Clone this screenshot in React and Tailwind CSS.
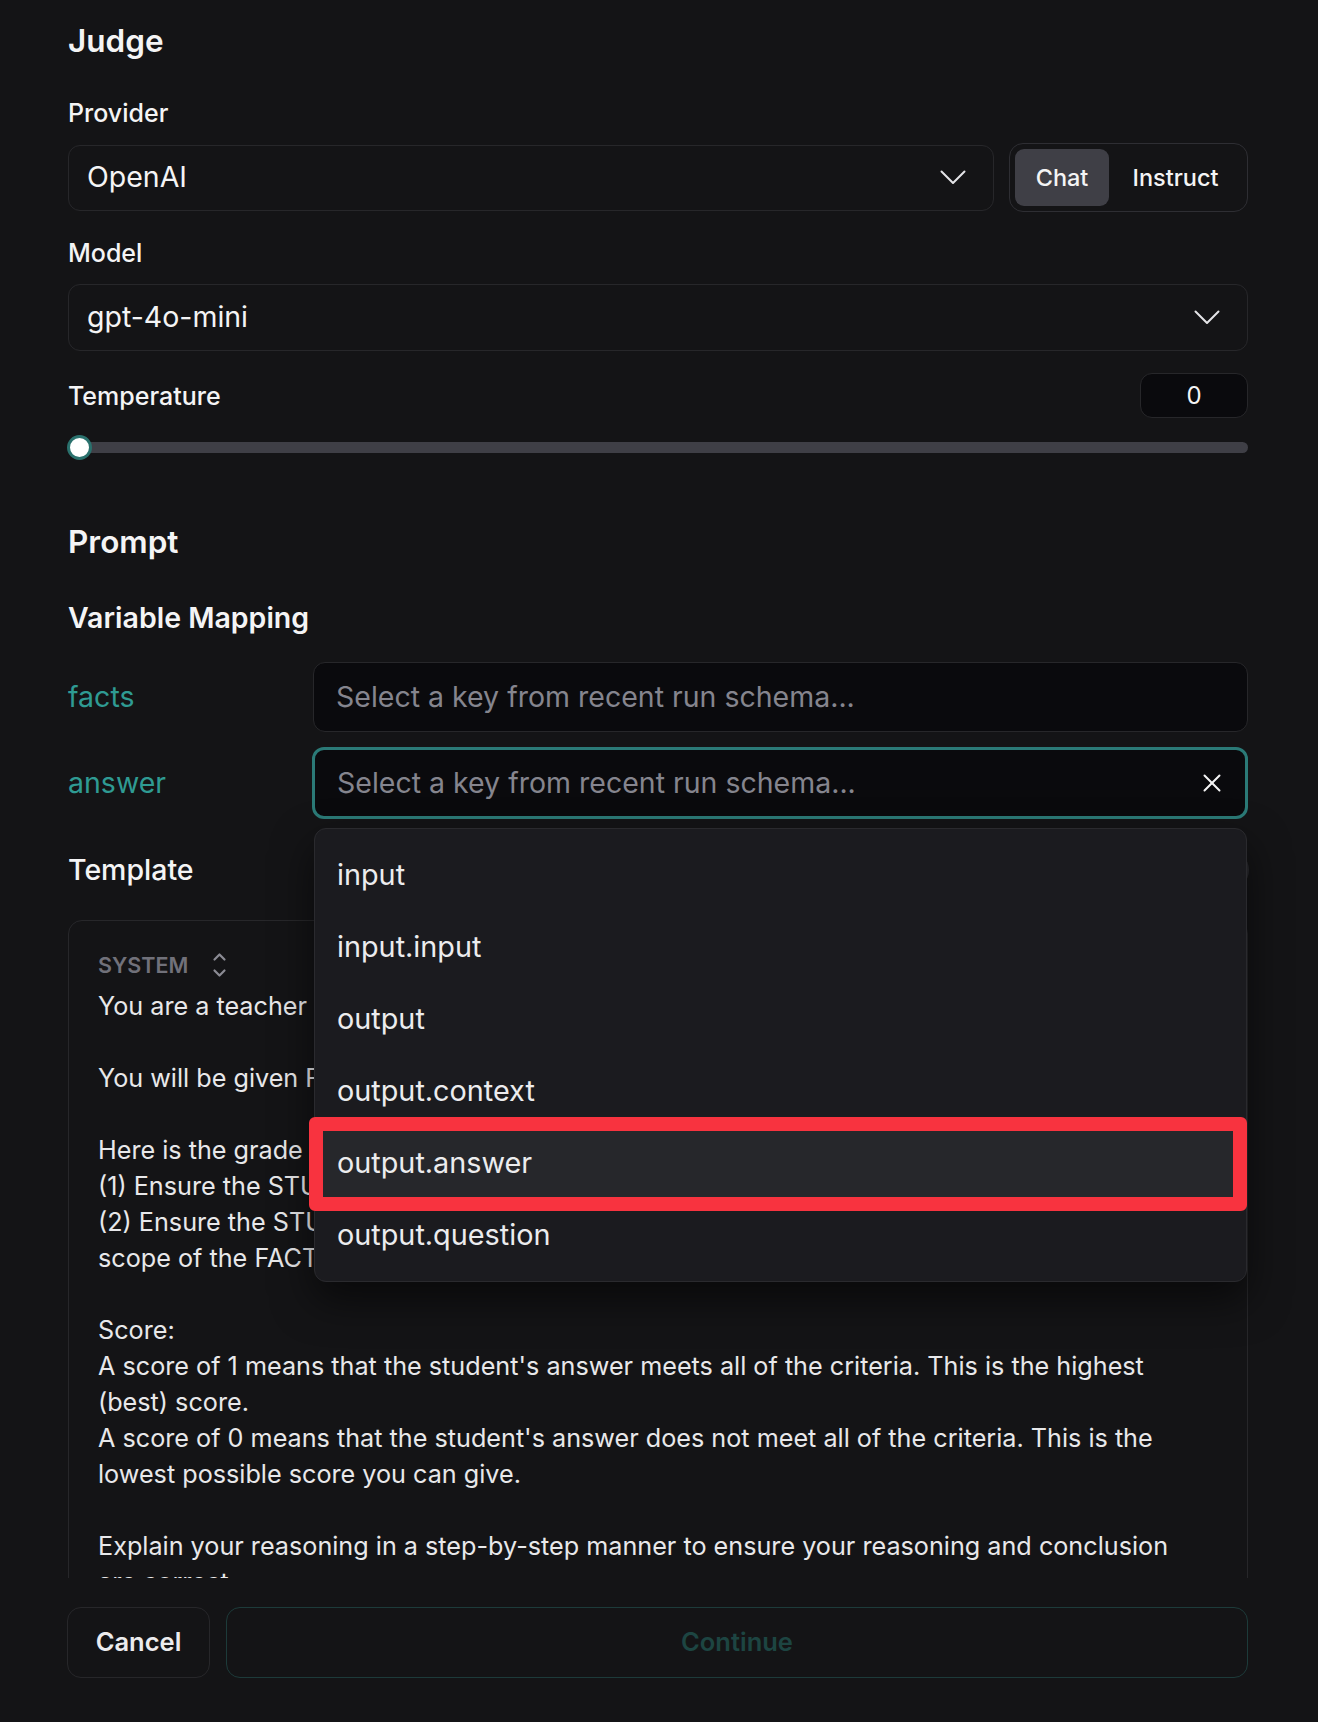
import { useState } from 'react';

const promptLines = [
  'You are a teacher grading a quiz.',
  '',
  'You will be given FACTS and a STUDENT ANSWER.',
  '',
  'Here is the grade criteria to follow:',
  '(1) Ensure the STUDENT ANSWER is grounded in the FACTS.',
  '(2) Ensure the STUDENT ANSWER does not contain "hallucinated" information outside the',
  'scope of the FACTS.',
  '',
  'Score:',
  "A score of 1 means that the student's answer meets all of the criteria. This is the highest",
  '(best) score.',
  "A score of 0 means that the student's answer does not meet all of the criteria. This is the",
  'lowest possible score you can give.',
  '',
  'Explain your reasoning in a step-by-step manner to ensure your reasoning and conclusion',
  'are correct.',
  '',
  'Avoid simply stating the correct answer at the outset.',
];

const schemaKeys = ['input', 'input.input', 'output', 'output.context', 'output.answer', 'output.question'];

const ChevronDown = () => (
  <svg width="26" height="15" viewBox="0 0 26 15" fill="none" stroke="#e4e4e7" strokeWidth="2" strokeLinecap="round" strokeLinejoin="round">
    <polyline points="1.5,1.5 13,13 24.5,1.5" />
  </svg>
);

const UpDown = () => (
  <svg width="15" height="26" viewBox="0 0 15 26" fill="none" stroke="#8b8b94" strokeWidth="2.2" strokeLinecap="round" strokeLinejoin="round">
    <polyline points="2.5,7.5 7.5,2.5 12.5,7.5" />
    <polyline points="2.5,18.5 7.5,23.5 12.5,18.5" />
  </svg>
);

const XIcon = () => (
  <svg width="18" height="18" viewBox="0 0 18 18" fill="none" stroke="#f4f4f5" strokeWidth="2" strokeLinecap="round">
    <line x1="1.5" y1="1.5" x2="16.5" y2="16.5" />
    <line x1="16.5" y1="1.5" x2="1.5" y2="16.5" />
  </svg>
);

export default function App() {
  const [mode, setMode] = useState('chat');
  const [active] = useState('output.answer');

  return (
    <div className="min-h-[1722px] w-full bg-[#141416] font-['Inter',sans-serif] text-[#f4f4f5] flex flex-col">
      {/* Scrollable form */}
      <div className="h-[1578px] overflow-hidden pl-[68px] pr-[70px] pt-[23px]">
        <h2 className="text-[31.5px] leading-[36px] font-semibold">Judge</h2>

        <div className="mt-[36px] text-[25px] leading-[36px] font-medium">Provider</div>
        <div className="mt-[12px] flex items-center gap-[15px] h-[69px]">
          <div className="flex-1 h-[66px] rounded-[12px] border border-[#27272a] pl-[18px] pr-[27px] flex items-center justify-between">
            <span className="text-[28.5px]">OpenAI</span>
            <ChevronDown />
          </div>
          <div className="w-[239px] h-[69px] rounded-[14px] border border-[#2e2e33] p-[5px] flex">
            <button
              onClick={() => setMode('chat')}
              className={`w-[94px] h-full rounded-[9px] text-[23.5px] font-medium ${mode === 'chat' ? 'bg-[#3f3f46]' : ''}`}>
              Chat
            </button>
            <button
              onClick={() => setMode('instruct')}
              className={`flex-1 h-full rounded-[9px] text-[23.5px] font-medium ${mode === 'instruct' ? 'bg-[#3f3f46]' : ''}`}>
              Instruct
            </button>
          </div>
        </div>

        <div className="mt-[23px] text-[25px] leading-[36px] font-medium">Model</div>
        <div className="mt-[13px] h-[67px] rounded-[12px] border border-[#27272a] pl-[18px] pr-[27px] flex items-center justify-between">
          <span className="text-[28.5px]">gpt-4o-mini</span>
          <ChevronDown />
        </div>

        <div className="mt-[22px] h-[45px] flex items-center justify-between">
          <span className="text-[25px] leading-[36px] font-medium">Temperature</span>
          <div className="w-[108px] h-[45px] rounded-[12px] bg-[#0a0a0d] border border-[#27272a] flex items-center justify-center text-[24px]">
            0
          </div>
        </div>

        {/* Slider */}
        <div className="mt-[17px] relative h-[25px] flex items-center">
          <div className="w-full h-[11px] rounded-full bg-[#3f3f46]" />
          <div className="absolute left-[-1px] top-0 w-[25px] h-[25px] rounded-full bg-white border-[3px] border-[#2a716d]" />
        </div>

        <h2 className="mt-[64px] text-[31.5px] leading-[36px] font-semibold">Prompt</h2>
        <h3 className="mt-[40px] text-[28.5px] leading-[36px] font-semibold">Variable Mapping</h3>

        <div className="mt-[26px] grid grid-cols-[244px_1fr] gap-y-[15px]">
          <div className="flex items-center text-[28.5px] text-[#2f9b93]">facts</div>
          <div className="ml-[1px] h-[70px] rounded-[12px] bg-[#0a0a0d] border border-[#27272a] pl-[22px] flex items-center text-[28.5px] text-[#85858e]">
            Select a key from recent run schema...
          </div>

          <div className="flex items-center text-[28.5px] text-[#2f9b93]">answer</div>
          <div className="relative">
            <div className="h-[72px] rounded-[12px] bg-[#0a0a0d] border-[3px] border-[#2b7a77] pl-[22px] pr-[24px] flex items-center justify-between text-[28.5px] text-[#85858e]">
              <span>Select a key from recent run schema...</span>
              <XIcon />
            </div>

            {/* Dropdown */}
            <div className="absolute z-10 top-[81px] left-[2px] w-[933px] h-[454px] rounded-[12px] bg-[#1b1b1f] border border-[#2a2a2e] py-[10px] shadow-[0_18px_40px_rgba(0,0,0,0.55)]">
              {schemaKeys.map(k => (
                <div
                  key={k}
                  className={`h-[72px] pl-[22px] flex items-center text-[28.8px] text-[#ececee] ${k === active ? 'bg-[#26272b]' : ''}`}>
                  {k}
                </div>
              ))}
              <div className="absolute top-[288px] left-[-6px] w-[938px] h-[94px] rounded-[6px] border-[14px] border-[#f8333f] pointer-events-none" />
            </div>
          </div>
        </div>

        <div className="mt-[31px] flex items-center justify-between">
          <span className="text-[28.5px] leading-[36px] font-medium">Template</span>
          <div className="w-[120px] h-[40px] rounded-full bg-[#2a2a2e] -mr-px" />
        </div>

        <div className="mt-[30px] rounded-[14px] border border-[#27272a] pl-[29px] pr-[29px] pt-[31px] pb-[30px]">
          <div className="h-[26px] flex items-center gap-[24px]">
            <span className="text-[21.5px] font-semibold text-[#71717a]">SYSTEM</span>
            <UpDown />
          </div>
          <div className="mt-[10px] text-[25.2px] leading-[36px] text-[#e8e8ea]">
            {promptLines.map((line, i) => (
              <p key={i} className="h-[36px] whitespace-pre">{line}</p>
            ))}
          </div>
        </div>
      </div>

      {/* Footer */}
      <div className="pt-[29px] pl-[67px] pr-[70px] flex gap-[16px]">
        <button className="w-[143px] h-[71px] rounded-[14px] border border-[#27272a] text-[25.5px] font-semibold text-[#ececee]">
          Cancel
        </button>
        <button className="flex-1 h-[71px] rounded-[14px] border border-[#1d3b3a] text-[25.5px] font-semibold text-[#1d4542]">
          Continue
        </button>
      </div>
    </div>
  );
}
